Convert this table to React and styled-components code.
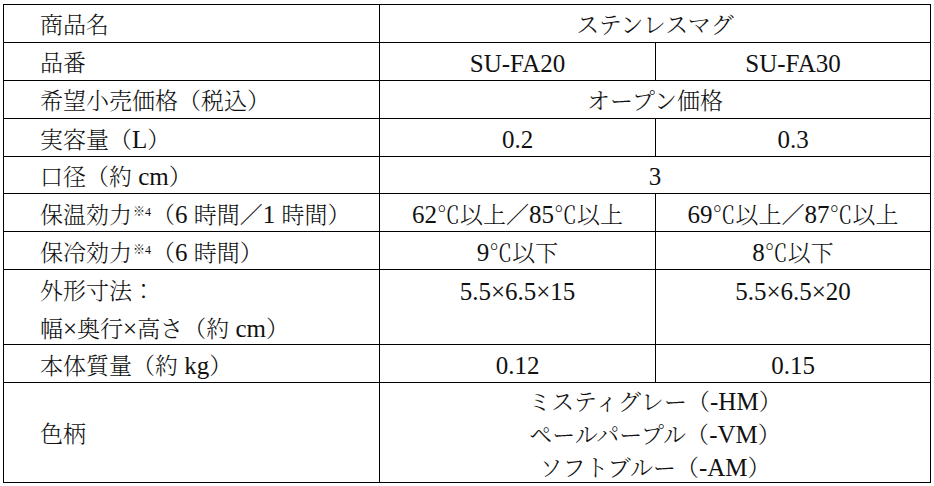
import React from "react";
import styled, { createGlobalStyle } from "styled-components";

const Global = createGlobalStyle`
  html, body { margin: 0; padding: 0; background: #fff; }
  body {
    font-family: "Liberation Serif", "Noto Serif CJK JP", "Noto Sans CJK JP", serif;
    color: #111;
  }
`;

const Sheet = styled.div`
  padding: 4px 0 0 3px;
`;

const Table = styled.div`
  display: grid;
  grid-template-columns: 375px 275px 274px;
  grid-template-rows: 37px 37px 37px 37px 36px 37px 37px 74px 37px 99px;
  gap: 1px;
  width: fit-content;
  background: #000;
  border: 1px solid #000;
`;

const Cell = styled.div`
  background: #fff;
  display: flex;
  flex-direction: column;
  justify-content: ${(p) => (p.$top ? "flex-start" : "center")};
  align-items: ${(p) => (p.$label ? "flex-start" : "center")};
  grid-column: ${(p) => (p.$span ? "span 2" : "auto")};
  padding: 3px 0 0 ${(p) => (p.$label ? "36px" : "0")};
  font-size: 23px;
  font-weight: 300;
  line-height: ${(p) => p.$lh || 37}px;
  white-space: nowrap;
  overflow: hidden;
`;

const Line = styled.span`
  display: block;
  height: ${(p) => p.$lh || 37}px;
`;

const Latin = styled.span`
  font-family: "Liberation Serif", serif;
  font-size: 25px;
  font-weight: 400;
`;

const Note = styled.span`
  font-size: 12px;
  position: relative;
  top: -7px;
  margin: 0 1px;
`;

function Txt({ children }) {
  const parts = String(children).split(/([\x20-\x7E×]+)/);
  return parts.map((p, i) =>
    p === "" ? null : /^[\x20-\x7E×]+$/.test(p) ? <Latin key={i}>{p}</Latin> : <span key={i}>{p}</span>
  );
}

const rows = [
  { label: ["商品名"], values: [["ステンレスマグ"]] },
  { label: ["品番"], values: [["SU-FA20"], ["SU-FA30"]] },
  { label: ["希望小売価格（税込）"], values: [["オープン価格"]] },
  { label: ["実容量（L）"], values: [["0.2"], ["0.3"]] },
  { label: ["口径（約 cm）"], values: [["3"]] },
  { label: [["保温効力", "（6 時間／1 時間）"]], values: [["62℃以上／85℃以上"], ["69℃以上／87℃以上"]] },
  { label: [["保冷効力", "（6 時間）"]], values: [["9℃以下"], ["8℃以下"]] },
  {
    label: ["外形寸法：", "幅×奥行×高さ（約 cm）"],
    values: [["5.5×6.5×15"], ["5.5×6.5×20"]],
    top: true,
  },
  { label: ["本体質量（約 kg）"], values: [["0.12"], ["0.15"]] },
  {
    label: ["色柄"],
    values: [["ミスティグレー（-HM）", "ペールパープル（-VM）", "ソフトブルー（-AM）"]],
    lh: 33,
  },
];

function LabelText({ t }) {
  if (Array.isArray(t)) {
    return (
      <>
        <Txt>{t[0]}</Txt>
        <Note>※4</Note>
        <Txt>{t[1]}</Txt>
      </>
    );
  }
  return <Txt>{t}</Txt>;
}

export default function App() {
  return (
    <>
      <Global />
      <Sheet>
        <Table>
          {rows.map((r, i) => (
            <React.Fragment key={i}>
              <Cell $label $top={r.top}>
                {r.label.map((t, j) => (
                  <Line key={j}>
                    <LabelText t={t} />
                  </Line>
                ))}
              </Cell>
              {r.values.map((v, k) => (
                <Cell key={k} $span={r.values.length === 1} $top={r.top} $lh={r.lh}>
                  {v.map((t, j) => (
                    <Line key={j} $lh={r.lh}>
                      <Txt>{t}</Txt>
                    </Line>
                  ))}
                </Cell>
              ))}
            </React.Fragment>
          ))}
        </Table>
      </Sheet>
    </>
  );
}
